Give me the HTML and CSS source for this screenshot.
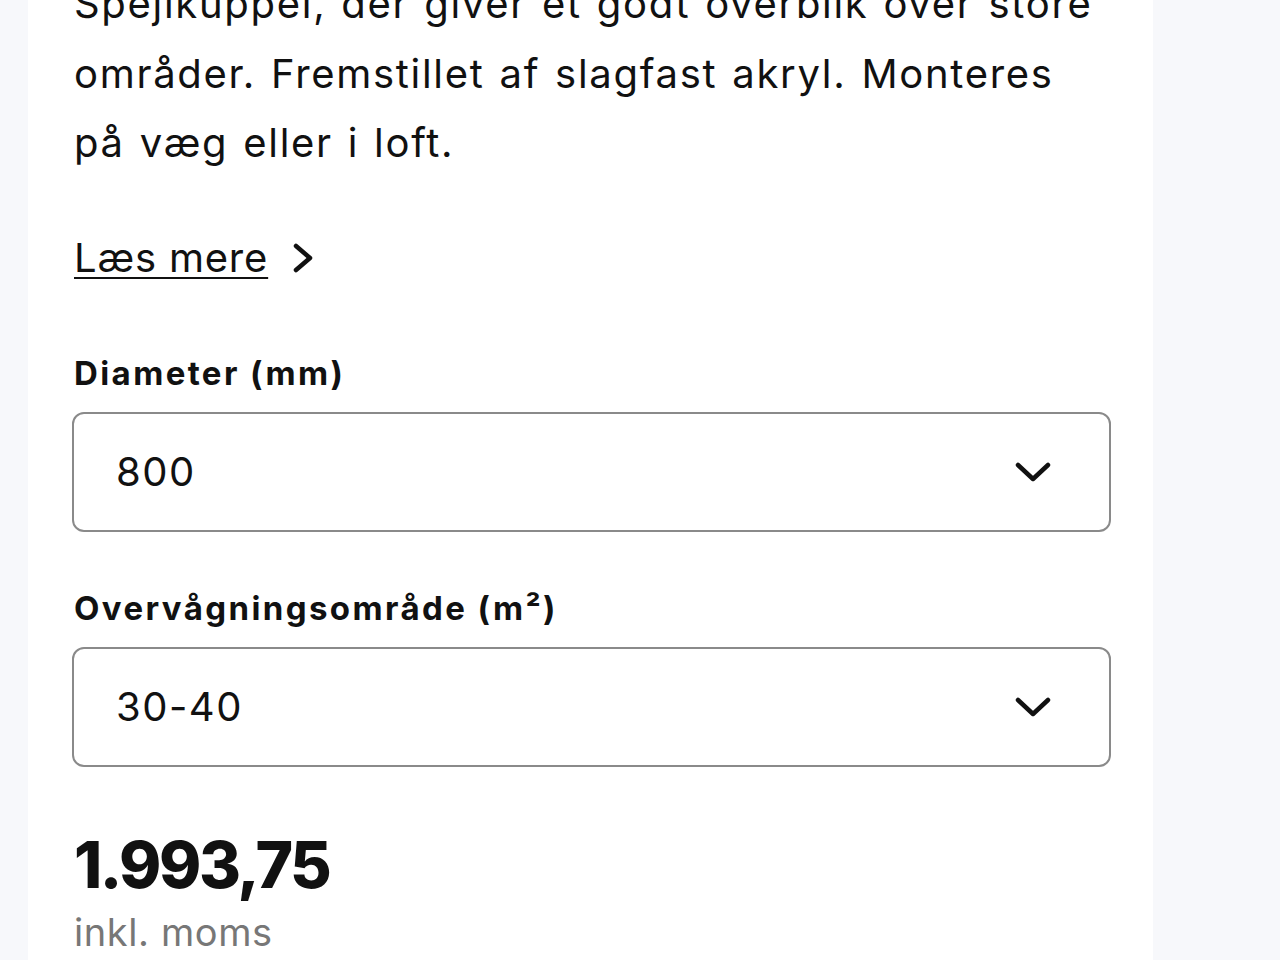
FILE: index.html
```html
<!DOCTYPE html>
<html lang="da">
<head>
    <meta charset="UTF-8">
    <meta name="viewport" content="width=device-width, initial-scale=1.0">
    <title>Spejlkuppel</title>
    <link rel="stylesheet" href="styles.css">
</head>
<body>
    <div class="panel">
        <p class="description">Spejlkuppel, der giver et godt overblik over store områder. Fremstillet af slagfast akryl. Monteres på væg eller i loft.</p>

        <a class="read-more" href="#">
            <span class="read-more-text">Læs mere</span>
            <svg class="chevron-right" width="22" height="32" viewBox="0 0 22 32">
                <polyline points="4,4 18,16 4,28" />
            </svg>
        </a>

        <div class="field">
            <label class="field-label" for="diameter">Diameter (mm)</label>
            <button class="select" id="diameter" type="button">
                <span>800</span>
                <svg class="chevron-down" width="36" height="22" viewBox="0 0 36 22">
                    <polyline points="3,4 18,18 33,4" />
                </svg>
            </button>
        </div>

        <div class="field">
            <label class="field-label" for="area">Overvågningsområde (m²)</label>
            <button class="select" id="area" type="button">
                <span>30-40</span>
                <svg class="chevron-down" width="36" height="22" viewBox="0 0 36 22">
                    <polyline points="3,4 18,18 33,4" />
                </svg>
            </button>
        </div>

        <div class="price">1.993,75</div>
        <div class="vat">inkl. moms</div>
    </div>
</body>
</html>
```

FILE: styles.css
```css
body {
    margin: 0;
    padding: 0;
    background-color: #f7f8fb;
    font-family: Inter, "Noto Sans", sans-serif;
    color: #111;
    height: 960px;
    overflow: hidden;
}

.panel {
    background: #fff;
    margin-left: 28px;
    width: 1125px;
    height: 1000px;
    padding: 0 40px 0 44px;
    box-sizing: border-box;
}

/* the text block is scrolled a little past the top edge */
.description {
    margin: -31px -4px 0 0;
    padding-left: 2px;
    font-size: 40px;
    line-height: 69.5px;
    letter-spacing: 1.7px;
    word-spacing: 2px;
}

.read-more {
    display: inline-flex;
    align-items: center;
    gap: 24px;
    margin: 56px 0 0 2px;
    color: #111;
    text-decoration: none;
    font-size: 40px;
    line-height: 48px;
    letter-spacing: 0.8px;
}

.read-more-text {
    text-decoration: underline;
    text-decoration-thickness: 2px;
    text-underline-offset: 5px;
}

.chevron-right polyline,
.chevron-down polyline {
    fill: none;
    stroke: #111;
    stroke-width: 4.5;
    stroke-linecap: round;
    stroke-linejoin: round;
}

.field {
    margin-top: 71px;
}

.field + .field {
    margin-top: 56px;
}

.field-label {
    display: block;
    margin: 0 0 19px 2px;
    font-size: 33px;
    font-weight: 700;
    line-height: 40px;
    letter-spacing: 2.4px;
}

.select {
    display: flex;
    justify-content: space-between;
    align-items: center;
    width: 1039px;
    height: 120px;
    padding: 0 58px 0 42px;
    background: #fff;
    border: 2px solid #8a8a8a;
    border-radius: 12px;
    font-family: inherit;
    font-size: 40px;
    letter-spacing: 1.5px;
    color: #111;
    cursor: pointer;
}

.price {
    margin: 62px 0 0 2px;
    font-size: 64px;
    font-weight: 800;
    line-height: 72px;
    letter-spacing: -2.4px;
}

.vat {
    margin: 7px 0 0 2px;
    font-size: 38px;
    line-height: 48px;
    letter-spacing: 0.6px;
    color: #777;
}
```
